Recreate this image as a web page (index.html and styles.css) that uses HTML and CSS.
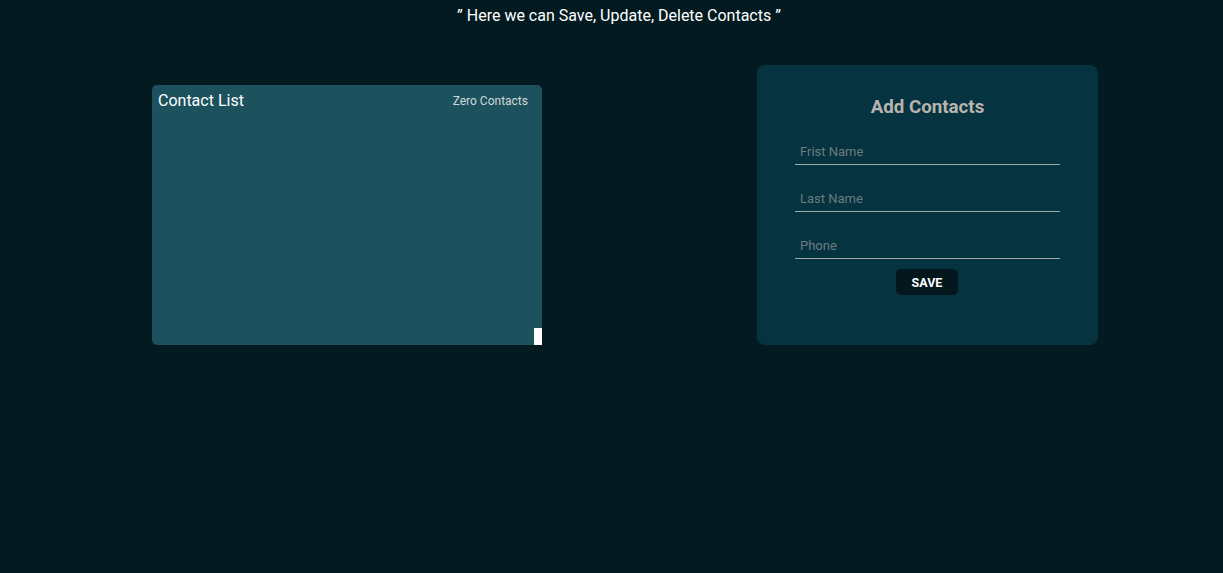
FILE: index.html
```html
<!DOCTYPE html>
<html>
<head>
<meta charset="utf-8">
<link rel="stylesheet" href="styles.css">
</head>
<body>
<p class="tagline">&#8221; Here we can Save, Update, Delete Contacts &#8221;</p>
<main class="row">
  <section class="list-card">
    <div class="list-head">
      <span class="list-title">Contact List</span>
      <span class="list-count">Zero Contacts</span>
    </div>
    <span class="corner"></span>
  </section>
  <section class="add-card">
    <h2 class="add-title">Add Contacts</h2>
    <form class="add-form">
      <input class="field" type="text" placeholder="Frist Name">
      <input class="field" type="text" placeholder="Last Name">
      <input class="field" type="text" placeholder="Phone">
      <button class="save" type="button">SAVE</button>
    </form>
  </section>
</main>
</body>
</html>
```
FILE: styles.css
```css
html, body {
  margin: 0;
  padding: 0;
  background: #021a20;
  font-family: Roboto, "Liberation Sans", sans-serif;
  height: 100%;
}
.tagline {
  margin: 0;
  padding: 6px 0 0 15px;
  text-align: center;
  color: #ffffff;
  font-size: 16px;
  line-height: 19px;
}
.row {
  display: flex;
  align-items: flex-start;
  padding-left: 152px;
  gap: 215px;
  margin-top: 40px;
}
.list-card {
  position: relative;
  margin-top: 20px;
  width: 390px;
  height: 260px;
  background: #1c525e;
  border-radius: 5px;
  box-sizing: border-box;
  padding: 6px 14px 0 6px;
}
.list-head {
  display: flex;
  justify-content: space-between;
  align-items: center;
}
.list-title {
  color: #ffffff;
  font-size: 16px;
  line-height: 19px;
}
.list-count {
  color: #d0d6d8;
  font-size: 12px;
}
.corner {
  position: absolute;
  right: 0;
  bottom: 0;
  width: 8px;
  height: 17px;
  background: #ffffff;
}
.add-card {
  width: 341px;
  height: 280px;
  box-sizing: border-box;
  background: #063340;
  border-radius: 8px;
  padding: 31px 38px 0 38px;
}
.add-title {
  margin: 0;
  text-align: center;
  color: #b9b4ae;
  font-size: 18.72px;
  line-height: 22px;
  font-weight: 700;
}
.add-form {
  display: flex;
  flex-direction: column;
  align-items: center;
  margin-top: 20px;
}
.field {
  width: 265px;
  height: 27px;
  box-sizing: border-box;
  background: transparent;
  border: none;
  border-bottom: 1px solid #a3a7a6;
  padding: 0 5px;
  margin: 0 0 20px 0;
  color: #ffffff;
  font-family: Roboto, "Liberation Sans", sans-serif;
  font-size: 13px;
  outline: none;
}
.field:last-of-type {
  margin-bottom: 10px;
}
.field::placeholder {
  color: #6b7b7f;
}
.save {
  width: 62px;
  height: 26px;
  margin-right: 1px;
  border: none;
  border-radius: 5px;
  background: #03171d;
  color: #ffffff;
  font-family: Roboto, "Liberation Sans", sans-serif;
  font-size: 12.5px;
  font-weight: 700;
  padding: 0;
}
```
